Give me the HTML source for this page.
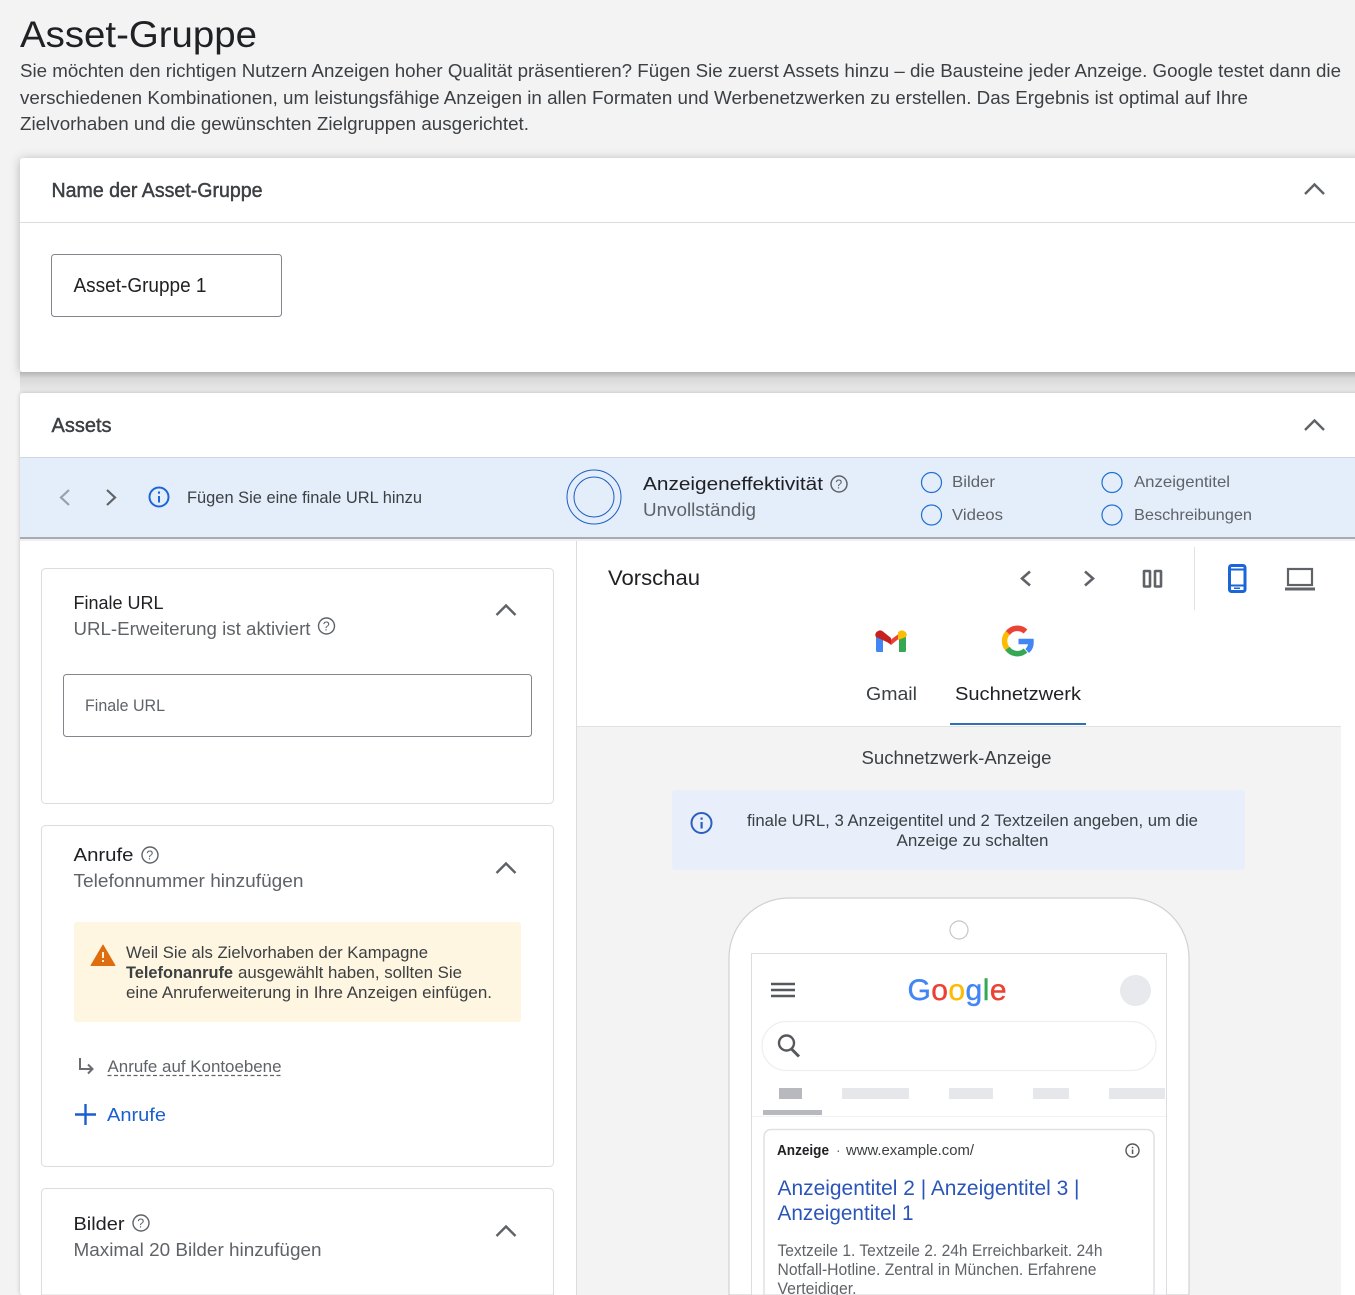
<!DOCTYPE html>
<html lang="de"><head><meta charset="utf-8"><title>Asset-Gruppe</title>
<style>
html,body{margin:0;padding:0;width:1355px;height:1295px;overflow:hidden;background:#f3f3f4}
svg{display:block}
text{font-family:"Liberation Sans",sans-serif;fill:#5f6368;font-size:18px;}
.h{fill:#3c4043;stroke:#3c4043;stroke-width:.45px}
.k{fill:#202124}
.d{fill:#3c4043}
.b{fill:#1a5fd0}
</style></head><body>
<svg width="1355" height="1295" viewBox="0 0 1355 1295" xmlns="http://www.w3.org/2000/svg">
<defs>
<filter id="s" x="-3%" y="-10%" width="106%" height="120%"><feDropShadow dx="0" dy="1" stdDeviation="5" flood-color="#000" flood-opacity=".26"/></filter>
<filter id="s2" x="-3%" y="-5%" width="106%" height="120%"><feDropShadow dx="0" dy="0" stdDeviation="2" flood-color="#000" flood-opacity=".22"/></filter>
<linearGradient id="g" x1="0" y1="0" x2="0" y2="1"><stop offset="0" stop-color="#b4b4b4"/><stop offset=".3" stop-color="#d8d8d8"/><stop offset="1" stop-color="#ececec"/></linearGradient>
</defs>
<text x="20" y="47" textLength="237" lengthAdjust="spacingAndGlyphs" class="k" style="font-size:37px">Asset-Gruppe</text>
<text x="20" y="77" textLength="1321" lengthAdjust="spacingAndGlyphs" class="d">Sie möchten den richtigen Nutzern Anzeigen hoher Qualität präsentieren? Fügen Sie zuerst Assets hinzu – die Bausteine jeder Anzeige. Google testet dann die</text>
<text x="20" y="104" textLength="1228" lengthAdjust="spacingAndGlyphs" class="d">verschiedenen Kombinationen, um leistungsfähige Anzeigen in allen Formaten und Werbenetzwerken zu erstellen. Das Ergebnis ist optimal auf Ihre</text>
<text x="20" y="130" textLength="509" lengthAdjust="spacingAndGlyphs" class="d">Zielvorhaben und die gewünschten Zielgruppen ausgerichtet.</text>

<!-- card 1 -->
<rect x="20" y="158" width="1345" height="214" rx="3" fill="#fff" filter="url(#s)"/>
<rect x="20" y="372" width="1335" height="21" fill="url(#g)"/>
<text x="51.500" y="197" style="font-size:20px" textLength="211" lengthAdjust="spacingAndGlyphs" class="h">Name der Asset-Gruppe</text>
<path d="M1305 194l9.500-9.500 9.500 9.500" fill="none" stroke="#5f6368" stroke-width="2.400"/>
<rect x="20" y="222" width="1335" height="1" fill="#dadce0"/>
<rect x="51.500" y="254.500" width="230" height="62" rx="3" fill="#fff" stroke="#80868b"/>
<text x="73.500" y="292" style="font-size:20px" textLength="133" lengthAdjust="spacingAndGlyphs" class="k">Asset-Gruppe 1</text>

<!-- card 2 -->
<rect x="20" y="393" width="1345" height="902" rx="3" fill="#fff" filter="url(#s2)"/>
<text x="51.500" y="432" style="font-size:20px" textLength="60" lengthAdjust="spacingAndGlyphs" class="h">Assets</text>
<path d="M1305 430l9.500-9.500 9.500 9.500" fill="none" stroke="#5f6368" stroke-width="2.400"/>

<rect x="576" y="538" width="1" height="757" fill="#dadce0"/>
<rect x="20" y="458" width="1335" height="79" fill="#e4edfa"/>
<rect x="20" y="457" width="1335" height="1" fill="#cdd6e2"/>
<rect x="20" y="537" width="1335" height="2" fill="#a9abae"/>
<rect x="20" y="539" width="1335" height="2" fill="#f0f0f2"/>
<path d="M69 490l-8 7.500 8 7.500" fill="none" stroke="#9aa0a6" stroke-width="2.200"/>
<path d="M107 490l8 7.500-8 7.500" fill="none" stroke="#5f6368" stroke-width="2.200"/>
<circle cx="159" cy="497" r="9.500" fill="none" stroke="#1a66d9" stroke-width="2"/>
<rect x="158" y="496" width="2" height="6.500" fill="#1a66d9"/><rect x="158" y="491.500" width="2" height="2.200" fill="#1a66d9"/>
<text x="187" y="503" style="font-size:16.500px" textLength="235" lengthAdjust="spacingAndGlyphs" class="d">Fügen Sie eine finale URL hinzu</text>
<circle cx="594" cy="497" r="27" fill="none" stroke="#1f5fbf"/>
<circle cx="594" cy="497" r="20" fill="none" stroke="#1f5fbf"/>
<text x="643" y="490" style="font-size:18px" textLength="180" lengthAdjust="spacingAndGlyphs" class="k">Anzeigeneffektivität</text>
<circle cx="839" cy="484" r="8" fill="none" stroke="#5f6368" stroke-width="1.500"/>
<text x="835.300" y="488.500" style="font-size:12.500px">?</text>
<text x="643" y="516" style="font-size:18px" textLength="113" lengthAdjust="spacingAndGlyphs">Unvollständig</text>
<circle cx="931.500" cy="482.500" r="10" fill="none" stroke="#1f6fd0" stroke-width="1.200"/>
<circle cx="931.500" cy="515" r="10" fill="none" stroke="#1f6fd0" stroke-width="1.200"/>
<circle cx="1112" cy="482.500" r="10" fill="none" stroke="#1f6fd0" stroke-width="1.200"/>
<circle cx="1112" cy="515" r="10" fill="none" stroke="#1f6fd0" stroke-width="1.200"/>
<text x="952" y="487" style="font-size:16px" textLength="43" lengthAdjust="spacingAndGlyphs">Bilder</text>
<text x="952" y="520" style="font-size:16px" textLength="51" lengthAdjust="spacingAndGlyphs">Videos</text>
<text x="1134" y="487" style="font-size:16px" textLength="96" lengthAdjust="spacingAndGlyphs">Anzeigentitel</text>
<text x="1134" y="520" style="font-size:16px" textLength="118" lengthAdjust="spacingAndGlyphs">Beschreibungen</text>

<!-- left column cards -->
<rect x="41.500" y="568.500" width="512" height="235" rx="4" fill="#fff" stroke="#dadce0"/>
<text x="73.500" y="609" style="font-size:18px" textLength="90" lengthAdjust="spacingAndGlyphs" class="k">Finale URL</text>
<text x="73.500" y="635" style="font-size:18px" textLength="237" lengthAdjust="spacingAndGlyphs">URL-Erweiterung ist aktiviert</text>
<circle cx="326.500" cy="626" r="8" fill="none" stroke="#5f6368" stroke-width="1.400"/>
<text x="322.800" y="630.500" style="font-size:12.500px">?</text>
<path d="M496.500 615l9.500-9.500 9.500 9.500" fill="none" stroke="#5f6368" stroke-width="2.400"/>
<rect x="63.500" y="674.500" width="468" height="62" rx="3" fill="#fff" stroke="#80868b"/>
<text x="85" y="711" style="font-size:16.500px" textLength="80" lengthAdjust="spacingAndGlyphs">Finale URL</text>

<rect x="41.500" y="825.500" width="512" height="341" rx="4" fill="#fff" stroke="#dadce0"/>
<text x="73.500" y="861" style="font-size:18px" textLength="60" lengthAdjust="spacingAndGlyphs" class="k">Anrufe</text>
<circle cx="150" cy="855" r="8" fill="none" stroke="#5f6368" stroke-width="1.400"/>
<text x="146.300" y="859.500" style="font-size:12.500px">?</text>
<text x="73.500" y="887" style="font-size:18px" textLength="230" lengthAdjust="spacingAndGlyphs">Telefonnummer hinzufügen</text>
<path d="M496.500 873l9.500-9.500 9.500 9.500" fill="none" stroke="#5f6368" stroke-width="2.400"/>
<rect x="74" y="922" width="447" height="100" rx="3" fill="#fef6e0"/>
<path d="M103 945l12 20.500h-24z" fill="#e06c10" stroke="#e06c10" stroke-linejoin="round"/>
<rect x="102" y="952" width="2" height="6" fill="#fef6e0"/><rect x="102" y="960" width="2" height="2" fill="#fef6e0"/>
<text x="126" y="958" style="font-size:16.500px" textLength="302" lengthAdjust="spacingAndGlyphs" class="d">Weil Sie als Zielvorhaben der Kampagne</text>
<text x="126" y="978" style="font-size:16.500px;font-weight:bold" textLength="107" lengthAdjust="spacingAndGlyphs" class="d">Telefonanrufe</text>
<text x="238" y="978" style="font-size:16.500px" textLength="224" lengthAdjust="spacingAndGlyphs" class="d">ausgewählt haben, sollten Sie</text>
<text x="126" y="998" style="font-size:16.500px" textLength="366" lengthAdjust="spacingAndGlyphs" class="d">eine Anruferweiterung in Ihre Anzeigen einfügen.</text>
<path d="M80 1058v11h12m-4-4.500l4.500 4.500-4.500 4.500" fill="none" stroke="#6b6b70" stroke-width="2"/>
<text x="107.500" y="1072" style="font-size:17px" textLength="174" lengthAdjust="spacingAndGlyphs">Anrufe auf Kontoebene</text>
<path d="M107.500 1075.500H282" stroke="#5f6368" stroke-dasharray="4 2.500" stroke-width="1.200"/>
<path d="M75 1114.500h21M85.500 1104v21" stroke="#1a5fd0" stroke-width="2.400" fill="none"/>
<text x="107" y="1121" style="font-size:18px" textLength="59" lengthAdjust="spacingAndGlyphs" class="b">Anrufe</text>

<path d="M41.500 1295v-102.500a4 4 0 0 1 4-4h504a4 4 0 0 1 4 4v102.500z" fill="#fff" stroke="#dadce0"/>
<text x="73.500" y="1230" style="font-size:18px" textLength="51" lengthAdjust="spacingAndGlyphs" class="k">Bilder</text>
<circle cx="141" cy="1223" r="8" fill="none" stroke="#5f6368" stroke-width="1.400"/>
<text x="137.300" y="1227.500" style="font-size:12.500px">?</text>
<text x="73.500" y="1256" style="font-size:18px" textLength="248" lengthAdjust="spacingAndGlyphs">Maximal 20 Bilder hinzufügen</text>
<path d="M496.500 1236l9.500-9.500 9.500 9.500" fill="none" stroke="#5f6368" stroke-width="2.400"/>

<!-- preview header -->
<text x="608" y="585" style="font-size:21px" textLength="92" lengthAdjust="spacingAndGlyphs" class="k">Vorschau</text>
<path d="M1030 571.500l-8 7 8 7" fill="none" stroke="#5f6368" stroke-width="2.600"/>
<path d="M1085 571.500l8 7-8 7" fill="none" stroke="#5f6368" stroke-width="2.600"/>
<rect x="1144" y="571" width="6" height="15.500" rx=".5" fill="none" stroke="#5f6368" stroke-width="2.600"/>
<rect x="1155" y="571" width="6" height="15.500" rx=".5" fill="none" stroke="#5f6368" stroke-width="2.600"/>
<rect x="1194" y="547" width="1" height="63" fill="#e0e2e5"/>
<rect x="1229.500" y="565.500" width="15.500" height="26" rx="2" fill="none" stroke="#1a66d9" stroke-width="3"/>
<path d="M1229 569.500h16M1229 585.500h16" stroke="#1a66d9" stroke-width="2"/>
<rect x="1234" y="587.500" width="6" height="1.500" fill="#1a66d9"/>
<rect x="1288" y="569" width="24" height="16" fill="none" stroke="#5f6368" stroke-width="2.200"/>
<rect x="1285" y="587.500" width="30" height="3" fill="#5f6368"/>

<!-- tabs -->
<path d="M876 637v13.500a1.500 1.500 0 0 0 1.500 1.500H883v-18z" fill="#4285f4"/>
<path d="M906 637v13.500a1.500 1.500 0 0 1-1.500 1.500H899v-18z" fill="#34a853"/>
<path d="M880 631.500l11 8 11-8 2 3-13 10.500-13-10.500z" fill="#ea4335"/>
<path d="M876 637a4 4 0 0 1 2-6 4.500 4.500 0 0 1 5 .5l8 6.500v6z" fill="#c5221f"/>
<path d="M906 637a4 4 0 0 0-2-6 4.500 4.500 0 0 0-5 .5l-1 .8v7.700z" fill="#fbbc04"/>
<path d="M1007.500 633.500a12 12 0 0 1 18-2" fill="none" stroke="#ea4335" stroke-width="5.500"/>
<path d="M1007.800 632.800a12 12 0 0 0 0 16.400" fill="none" stroke="#fbbc04" stroke-width="5.500"/>
<path d="M1007.500 648.500a12 12 0 0 0 18 2" fill="none" stroke="#34a853" stroke-width="5.500"/>
<path d="M1018.500 641.500h12.500c.2 4-1 7-3.800 9.500" fill="none" stroke="#4285f4" stroke-width="5.500"/>
<text x="866" y="700" style="font-size:18px" textLength="51" lengthAdjust="spacingAndGlyphs" class="d">Gmail</text>
<text x="955" y="700" style="font-size:18px" textLength="126" lengthAdjust="spacingAndGlyphs" class="k">Suchnetzwerk</text>
<rect x="950" y="723" width="136" height="2" fill="#2f6fb5"/>
<rect x="577" y="726" width="764" height="1" fill="#dfe1e4"/>

<!-- preview panel -->
<rect x="577" y="727" width="764" height="568" fill="#f3f3f4"/>
<text x="861.500" y="764" style="font-size:18px" textLength="190" lengthAdjust="spacingAndGlyphs" class="d">Suchnetzwerk-Anzeige</text>
<rect x="672" y="790" width="573" height="80" rx="3" fill="#e8effb"/>
<circle cx="701.500" cy="823" r="10" fill="none" stroke="#2a5fc0" stroke-width="2"/>
<rect x="700.500" y="822" width="2.200" height="6.500" fill="#2a5fc0"/><rect x="700.500" y="817.500" width="2.200" height="2.200" fill="#2a5fc0"/>
<text x="747" y="826" style="font-size:17px" textLength="451" lengthAdjust="spacingAndGlyphs" class="d">finale URL, 3 Anzeigentitel und 2 Textzeilen angeben, um die</text>
<text x="896.500" y="846" style="font-size:17px" textLength="152" lengthAdjust="spacingAndGlyphs" class="d">Anzeige zu schalten</text>

<!-- phone -->
<path d="M729 1295V958a60 60 0 0 1 60-60h340a60 60 0 0 1 60 60v337z" fill="#fff" stroke="#cfd1d4" stroke-width="1.200"/>
<circle cx="959" cy="930" r="9" fill="#fff" stroke="#c4c6c9" stroke-width="1.200"/>
<path d="M751.500 1295V953.500h415V1295z" fill="#fff" stroke="#dcdde0"/>
<path d="M771 984h24M771 990h24M771 996h24" stroke="#55585c" stroke-width="2.400"/>
<text x="907.500" y="1000" textLength="99" lengthAdjust="spacing" style="font-size:30px;stroke-width:.4px"><tspan style="fill:#4285f4;stroke:#4285f4">G</tspan><tspan style="fill:#ea4335;stroke:#ea4335">o</tspan><tspan style="fill:#fbbc04;stroke:#fbbc04">o</tspan><tspan style="fill:#4285f4;stroke:#4285f4">g</tspan><tspan style="fill:#34a853;stroke:#34a853">l</tspan><tspan style="fill:#ea4335;stroke:#ea4335">e</tspan></text>
<circle cx="1135.500" cy="990.500" r="15.500" fill="#e8e9ed"/>
<rect x="762" y="1021.500" width="394" height="49" rx="24.500" fill="#fff" stroke="#eeeeef" stroke-width="1.200"/>
<circle cx="786.500" cy="1043" r="7.500" fill="none" stroke="#55585c" stroke-width="2.400"/>
<path d="M791.500 1049l7.500 7.500" stroke="#55585c" stroke-width="3"/>
<rect x="779" y="1088" width="23" height="11" fill="#b8b9bf"/>
<rect x="842" y="1088" width="67" height="11" fill="#e6e7eb"/>
<rect x="949" y="1088" width="44" height="11" fill="#e6e7eb"/>
<rect x="1033" y="1088" width="36" height="11" fill="#e6e7eb"/>
<rect x="1109" y="1088" width="56" height="11" fill="#e6e7eb"/>
<rect x="763" y="1110" width="59" height="5" fill="#b8b9bf"/>
<rect x="752" y="1116" width="414" height="1" fill="#f2f2f3"/>
<path d="M764 1295v-158.500a7 7 0 0 1 7-7h376a7 7 0 0 1 7 7V1295z" fill="#fff" stroke="#e0e1e4" stroke-width="1.500"/>
<text x="777" y="1155" style="font-size:14.500px;font-weight:bold" textLength="52" lengthAdjust="spacingAndGlyphs" class="k">Anzeige</text>
<text x="836" y="1155" style="font-size:14px">·</text>
<text x="846" y="1155" style="font-size:14.500px" textLength="128" lengthAdjust="spacingAndGlyphs" class="d">www.example.com/</text>
<circle cx="1132.500" cy="1150.500" r="6.500" fill="none" stroke="#55585c" stroke-width="1.400"/>
<rect x="1131.800" y="1149.500" width="1.500" height="4.500" fill="#55585c"/><rect x="1131.800" y="1146.800" width="1.500" height="1.500" fill="#55585c"/>
<text x="777.500" y="1195" style="font-size:21.500px;fill:#2a55b8" textLength="302" lengthAdjust="spacingAndGlyphs">Anzeigentitel 2 | Anzeigentitel 3 |</text>
<text x="777.500" y="1220" style="font-size:21.500px;fill:#2a55b8" textLength="136" lengthAdjust="spacingAndGlyphs">Anzeigentitel 1</text>
<text x="777.500" y="1256" style="font-size:16.500px" textLength="325" lengthAdjust="spacingAndGlyphs">Textzeile 1. Textzeile 2. 24h Erreichbarkeit. 24h</text>
<text x="777.500" y="1275" style="font-size:16.500px" textLength="319" lengthAdjust="spacingAndGlyphs">Notfall-Hotline. Zentral in München. Erfahrene</text>
<text x="777.500" y="1294" style="font-size:16.500px" textLength="79" lengthAdjust="spacingAndGlyphs">Verteidiger.</text>
</svg>
</body></html>
